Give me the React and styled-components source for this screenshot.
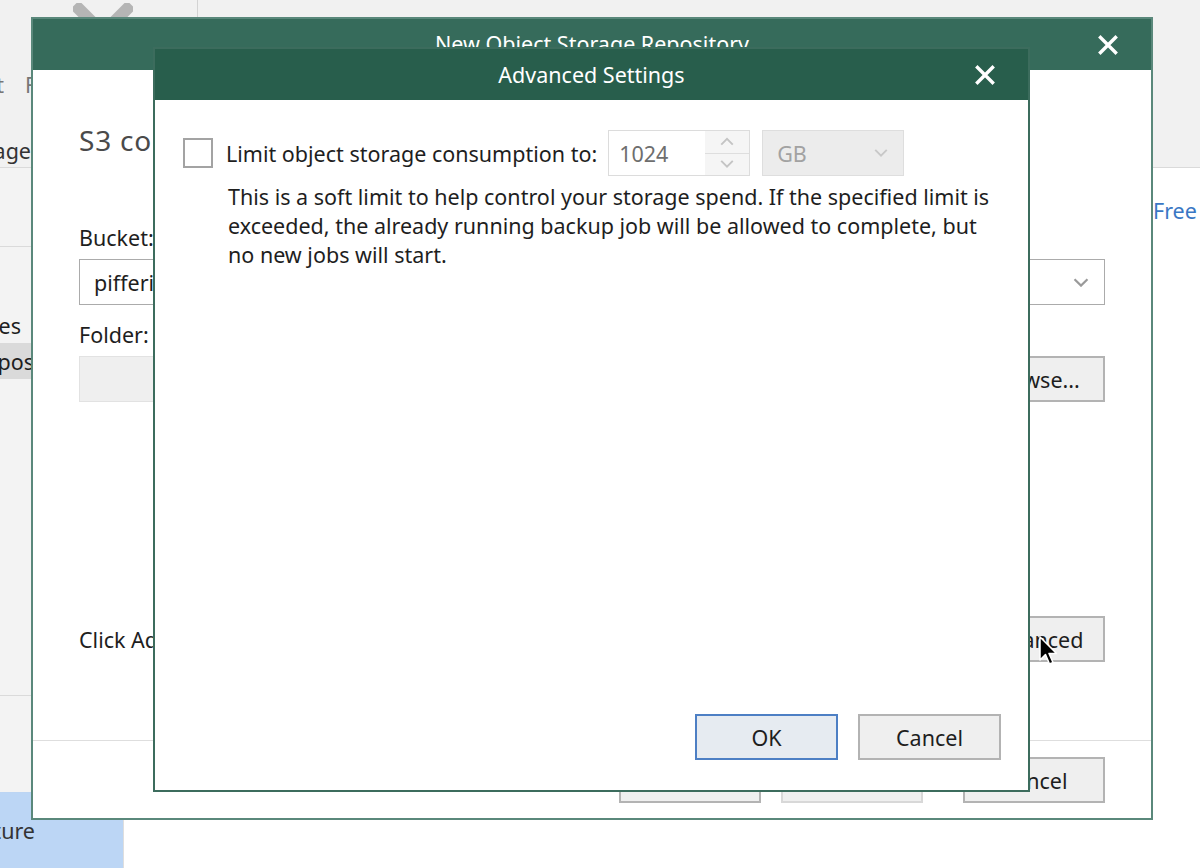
import React from 'react';
import styled, { createGlobalStyle } from 'styled-components';

const GlobalStyle = createGlobalStyle`
  html, body { margin: 0; padding: 0; }
  body {
    font-family: 'Noto Sans', 'Open Sans', sans-serif;
    background: #fff;
  }
`;

const Desktop = styled.div`
  position: relative;
  width: 1200px;
  height: 868px;
  overflow: hidden;
  display: flex;
  flex-direction: column;
  background: #fff;
  color: #1e1e1e;
  font-size: 21.5px;
`;

/* ---------- background app ---------- */

const Ribbon = styled.div`
  height: 168px;
  flex-shrink: 0;
  box-sizing: border-box;
  background: #f1f1f1;
  border-bottom: 1px solid #dadada;
  display: flex;
  flex-direction: column;
`;

const RibbonTools = styled.div`
  display: flex;
  align-items: flex-start;
  height: 60px;
  padding-left: 73px;
`;

const ToolIcon = styled.svg`
  margin-top: 3px;
  flex-shrink: 0;
`;

const ToolSeparator = styled.div`
  width: 1px;
  height: 60px;
  margin-left: 64px;
  background: #d3d3d3;
`;

const RibbonLabels = styled.div`
  display: flex;
  gap: 21px;
  margin-top: 10px;
  color: #777;
`;

const CutLabel = styled.div`
  width: ${p => p.w}px;
  display: flex;
  justify-content: flex-end;
  overflow: hidden;
  white-space: nowrap;
  flex-shrink: 0;
`;

const GroupCaption = styled.div`
  margin-top: 37px;
  color: #333;
`;

const Main = styled.div`
  flex: 1;
  display: flex;
  min-height: 0;
`;

const NavPane = styled.div`
  width: 124px;
  flex-shrink: 0;
  box-sizing: border-box;
  background: #f3f3f3;
  border-right: 1px solid #dedede;
  display: flex;
  flex-direction: column;
`;

const NavHeader = styled.div`
  height: 78px;
  flex-shrink: 0;
  border-bottom: 1px solid #dadada;
`;

const Tree = styled.div`
  flex: 1;
  padding-top: 60px;
`;

const TreeItem = styled.div`
  height: 36px;
  display: flex;
  align-items: center;
  white-space: nowrap;
  overflow: hidden;
  background: ${p => (p.selected ? '#dadada' : 'transparent')};
  span { margin-left: ${p => p.shift || 0}px; }
`;

const NavButton = styled.div`
  height: ${p => p.h}px;
  flex-shrink: 0;
  border-top: 1px solid ${p => (p.active ? '#bcd5f3' : '#dadada')};
  background: ${p => (p.active ? '#bcd6f5' : '#f3f3f3')};
  color: #333;
  display: flex;
  align-items: center;
  justify-content: flex-end;
  padding-right: 88px;
  white-space: nowrap;
  overflow: hidden;
`;

const Content = styled.div`
  flex: 1;
  display: flex;
  padding-top: 28px;
  align-items: flex-start;
`;

const LinkSlot = styled.div`
  margin-left: auto;
  width: 47px;
  overflow: hidden;
  white-space: nowrap;
  color: #3a77c4;
`;

/* ---------- windows ---------- */

const Window = styled.div`
  position: absolute;
  left: ${p => p.x}px;
  top: ${p => p.y}px;
  width: ${p => p.w}px;
  height: ${p => p.h}px;
  box-sizing: border-box;
  border: 2px solid ${p => p.edge};
  background: #fff;
  display: flex;
  flex-direction: column;
`;

const TitleBar = styled.div`
  height: 51px;
  flex-shrink: 0;
  background: ${p => p.bg};
  color: #fff;
  display: grid;
  grid-template-columns: 1fr auto 1fr;
  align-items: center;
  padding-right: ${p => p.pr}px;
  padding-left: ${p => p.pr}px;
  overflow: hidden;
`;

const TitleText = styled.div`
  grid-column: 2;
  white-space: nowrap;
  margin-top: ${p => p.shift || 0}px;
`;

const CloseBox = styled.div`
  grid-column: 3;
  justify-self: end;
  display: flex;
`;

const CloseIcon = ({ size = 20 }) => (
  <svg width={size} height={size} viewBox="0 0 20 20">
    <path d="M2.5 2.5 L17.5 17.5 M17.5 2.5 L2.5 17.5" stroke="#fff" strokeWidth="3.4" strokeLinecap="square" />
  </svg>
);

/* wizard */

const WizardBody = styled.div`
  flex: 1;
  display: flex;
  flex-direction: column;
  padding: 51px 46px 78px;
`;

const StepTitle = styled.div`
  font-size: 28px;
  line-height: 38px;
  letter-spacing: 0.8px;
  color: #4a4a4a;
  white-space: nowrap;
`;

const FieldLabel = styled.div`
  line-height: 26px;
  margin-top: ${p => p.mt}px;
  margin-bottom: 8px;
`;

const Field = styled.div`
  height: 46px;
  box-sizing: border-box;
  flex: 1;
  display: flex;
  align-items: center;
  padding: 0 14px;
  border: 1px solid ${p => (p.disabled ? '#e2e2e2' : '#ababab')};
  background: ${p => (p.disabled ? '#efefef' : '#fff')};
  white-space: nowrap;
  span { flex: 1; }
`;

const FieldRow = styled.div`
  display: flex;
  gap: 20px;
`;

const Button = styled.div`
  width: ${p => p.w || 142}px;
  height: 46px;
  box-sizing: border-box;
  flex-shrink: 0;
  margin-left: ${p => p.ml || 0}px;
  display: flex;
  align-items: center;
  justify-content: center;
  background: ${p => (p.primary ? '#e6ebf1' : '#efefef')};
  border: 2px solid ${p => (p.primary ? '#4d7fc4' : p.disabled ? '#d8d8d8' : '#b3b3b3')};
  color: ${p => (p.disabled ? '#9a9a9a' : '#1e1e1e')};
  white-space: nowrap;
`;

const AdvancedRow = styled.div`
  margin-top: auto;
  display: flex;
  align-items: center;
  justify-content: space-between;
  white-space: nowrap;
`;

const WizardFooter = styled.div`
  height: 78px;
  box-sizing: border-box;
  flex-shrink: 0;
  border-top: 1px solid #dedede;
  padding: 16px 46px 0 0;
  display: flex;
  justify-content: flex-end;
  gap: 20px;
`;

/* advanced settings */

const DialogBody = styled.div`
  flex: 1;
  display: flex;
  flex-direction: column;
  padding: 30px 27px 30px 28px;
`;

const LimitRow = styled.div`
  display: flex;
  align-items: center;
  height: 46px;
`;

const CheckBox = styled.div`
  width: 30px;
  height: 30px;
  box-sizing: border-box;
  border: 2px solid #a3a3a3;
  background: #fff;
  flex-shrink: 0;
  margin-right: 13px;
`;

const LimitLabel = styled.div`
  white-space: nowrap;
  margin-right: 11px;
`;

const Spinner = styled.div`
  width: 142px;
  height: 46px;
  box-sizing: border-box;
  border: 1px solid #dcdcdc;
  display: flex;
  flex-shrink: 0;
  margin-right: 12px;
  color: #6e6e6e;
`;

const SpinValue = styled.div`
  flex: 1;
  display: flex;
  align-items: center;
  padding-left: 10px;
`;

const SpinButtons = styled.div`
  width: 44px;
  display: flex;
  flex-direction: column;
  background: #f5f5f5;
`;

const SpinArrow = styled.div`
  flex: 1;
  display: flex;
  align-items: center;
  justify-content: center;
  border-top: ${p => (p.lower ? '1px solid #dedede' : 'none')};
`;

const Combo = styled.div`
  width: 142px;
  height: 46px;
  box-sizing: border-box;
  flex-shrink: 0;
  border: 1px solid #dedede;
  background: #ececec;
  color: #a2a2a2;
  display: flex;
  align-items: center;
  justify-content: space-between;
  padding: 0 14px 0 14px;
`;

const Hint = styled.div`
  margin: 6px 0 0 45px;
  line-height: 29px;
  white-space: nowrap;
`;

const DialogFooter = styled.div`
  margin-top: auto;
  display: flex;
  justify-content: flex-end;
  gap: 20px;
`;

const Chevron = ({ up, color = '#c4c4c4', size = 16 }) => (
  <svg width={size} height={size * 0.6} viewBox="0 0 16 10">
    <path d={up ? 'M2 8 L8 2 L14 8' : 'M2 2 L8 8 L14 2'} fill="none" stroke={color} strokeWidth="2" />
  </svg>
);

const Cursor = styled.svg`
  position: absolute;
  left: 1039px;
  top: 636px;
`;

export default function App() {
  return (
    <>
      <GlobalStyle />
      <Desktop>
        <Ribbon>
          <RibbonTools>
            <ToolIcon width="60" height="60" viewBox="0 0 60 60">
              <path d="M6 6 L54 54 M54 6 L6 54" stroke="#b5b5b5" strokeWidth="12" strokeLinecap="square" />
            </ToolIcon>
            <ToolSeparator />
          </RibbonTools>
          <RibbonLabels>
            <CutLabel w={4}>Edit</CutLabel>
            <span>Filter</span>
          </RibbonLabels>
          <GroupCaption>
            <CutLabel w={31}>Storage</CutLabel>
          </GroupCaption>
        </Ribbon>
        <Main>
          <NavPane>
            <NavHeader />
            <Tree>
              <TreeItem><CutLabel w={21}>Proxies</CutLabel></TreeItem>
              <TreeItem shift={-108} selected><span>Backup Repositories</span></TreeItem>
            </Tree>
            <NavButton h={96} />
            <NavButton h={75} active>Backup Infrastructure</NavButton>
          </NavPane>
          <Content>
            <LinkSlot>Free space</LinkSlot>
          </Content>
        </Main>

        <Window x={31} y={17} w={1122} h={803} edge="#5a887b">
          <TitleBar bg="#366b5b" pr={33}>
            <TitleText shift={-2}>New Object Storage Repository</TitleText>
            <CloseBox><CloseIcon /></CloseBox>
          </TitleBar>
          <WizardBody>
            <StepTitle>S3 compatible storage bucket</StepTitle>
            <FieldLabel mt={66}>Bucket:</FieldLabel>
            <FieldRow>
              <Field>
                <span>pifferi-backups</span>
                <Chevron color="#9a9a9a" size={18} />
              </Field>
            </FieldRow>
            <FieldLabel mt={17}>Folder:</FieldLabel>
            <FieldRow>
              <Field disabled />
              <Button>Browse...</Button>
            </FieldRow>
            <AdvancedRow>
              <span>Click Advanced to specify additional options.</span>
              <Button>Advanced</Button>
            </AdvancedRow>
          </WizardBody>
          <WizardFooter>
            <Button>&lt; Previous</Button>
            <Button disabled>Next &gt;</Button>
            <Button ml={20}>Cancel</Button>
          </WizardFooter>
        </Window>

        <Window x={153} y={47} w={877} h={745} edge="#3c6c5d">
          <TitleBar bg="#285e4c" pr={33}>
            <TitleText>Advanced Settings</TitleText>
            <CloseBox><CloseIcon /></CloseBox>
          </TitleBar>
          <DialogBody>
            <LimitRow>
              <CheckBox />
              <LimitLabel>Limit object storage consumption to:</LimitLabel>
              <Spinner>
                <SpinValue>1024</SpinValue>
                <SpinButtons>
                  <SpinArrow><Chevron up /></SpinArrow>
                  <SpinArrow lower><Chevron /></SpinArrow>
                </SpinButtons>
              </Spinner>
              <Combo>
                <span>GB</span>
                <Chevron color="#c8c8c8" />
              </Combo>
            </LimitRow>
            <Hint>
              This is a soft limit to help control your storage spend. If the specified limit is<br />
              exceeded, the already running backup job will be allowed to complete, but<br />
              no new jobs will start.
            </Hint>
            <DialogFooter>
              <Button primary w={143}>OK</Button>
              <Button w={143}>Cancel</Button>
            </DialogFooter>
          </DialogBody>
        </Window>

        <Cursor width="22" height="32" viewBox="0 0 22 32">
          <path d="M1 1 L1 24 L6.5 18.5 L10.5 28 L14 26.5 L10 17.5 L17.5 17.5 Z" fill="#000" stroke="#fff" strokeWidth="1.5" strokeLinejoin="round" />
        </Cursor>
      </Desktop>
    </>
  );
}
